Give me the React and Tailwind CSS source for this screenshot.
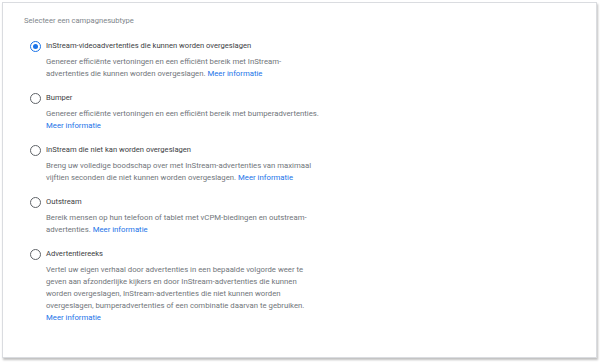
import React, { useState } from 'react';

const options = [
    {
        id: 'skippable',
        title: 'InStream-videoadvertenties die kunnen worden overgeslagen',
        description: 'Genereer efficiënte vertoningen en een efficiënt bereik met InStream-advertenties die kunnen worden overgeslagen.',
    },
    {
        id: 'bumper',
        title: 'Bumper',
        description: 'Genereer efficiënte vertoningen en een efficiënt bereik met bumperadvertenties.',
    },
    {
        id: 'nonskippable',
        title: 'InStream die niet kan worden overgeslagen',
        description: 'Breng uw volledige boodschap over met InStream-advertenties van maximaal vijftien seconden die niet kunnen worden overgeslagen.',
    },
    {
        id: 'outstream',
        title: 'Outstream',
        description: 'Bereik mensen op hun telefoon of tablet met vCPM-biedingen en outstream-advertenties.',
    },
    {
        id: 'sequence',
        title: 'Advertentiereeks',
        description: 'Vertel uw eigen verhaal door advertenties in een bepaalde volgorde weer te geven aan afzonderlijke kijkers en door InStream-advertenties die kunnen worden overgeslagen, InStream-advertenties die niet kunnen worden overgeslagen, bumperadvertenties of een combinatie daarvan te gebruiken.',
    },
];

const Radio = ({ checked }) => (
    <span
        className={`mt-[1px] flex h-[11px] w-[11px] shrink-0 items-center justify-center rounded-full border-[1.5px] ${
            checked ? 'border-[#1a73e8]' : 'border-[#5f6368]'
        }`}
    >
        {checked && <span className="h-[5px] w-[5px] rounded-full bg-[#1a73e8]" />}
    </span>
);

const App = () => {
    const [selected, setSelected] = useState('skippable');

    return (
        <div className="h-[363px] w-[601px] bg-white p-[2px] pr-[4px] pb-[5px] font-['Roboto',sans-serif]">
            <div className="h-full w-full border border-[#dadce0] bg-white pl-[21px] pt-[12px] shadow-[1px_2px_2px_rgba(0,0,0,0.25)]">
                <p className="text-[7.6px] leading-[12px] text-[#80868b]">Selecteer een campagnesubtype</p>

                <div className="mt-[13px] flex flex-col gap-[12px] pl-[6px]">
                    {options.map((opt) => (
                        <div
                            key={opt.id}
                            onClick={() => setSelected(opt.id)}
                            className="flex cursor-pointer items-start gap-[5px]"
                        >
                            <Radio checked={selected === opt.id} />
                            <div className="w-[277px]">
                                <p className="text-[7.6px] leading-[12px] text-[#3c4043]">{opt.title}</p>
                                <p className="mt-[4px] text-[7.75px] leading-[12px] text-[#70757a]">
                                    {opt.description}{' '}
                                    <a className="text-[#1a73e8]">Meer informatie</a>
                                </p>
                            </div>
                        </div>
                    ))}
                </div>
            </div>
        </div>
    );
};

export default App;
